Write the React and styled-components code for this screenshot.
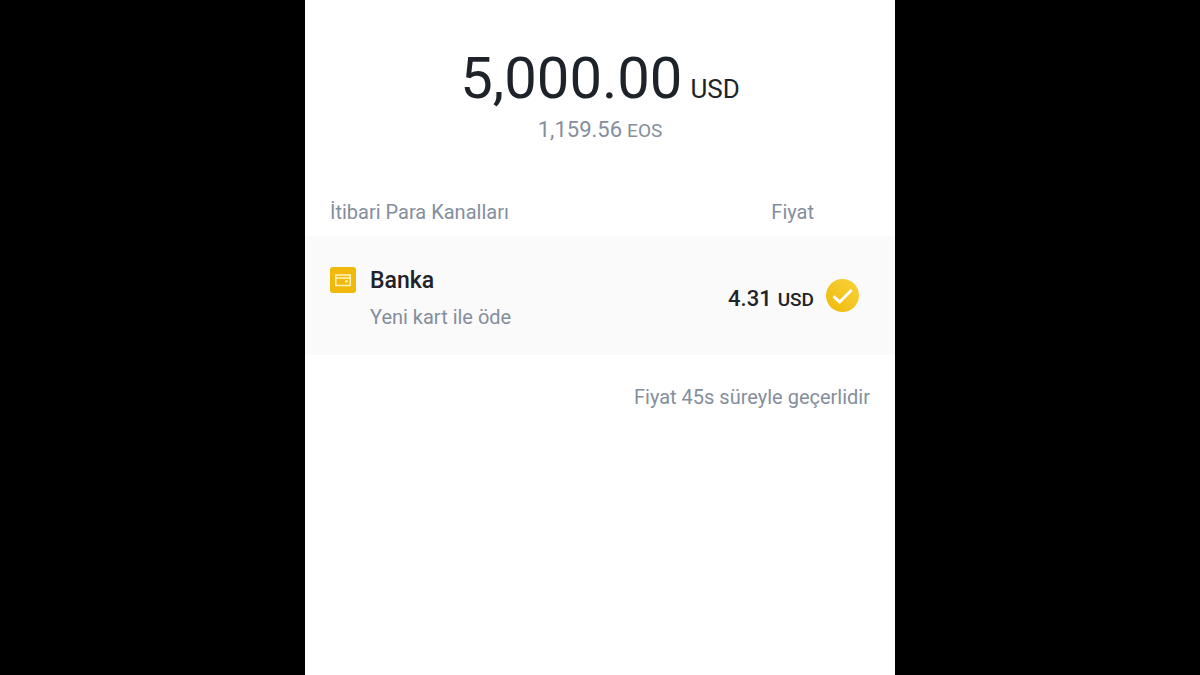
import React from 'react';
import styled, {createGlobalStyle} from 'styled-components';

const GlobalStyle = createGlobalStyle`
  * {
    box-sizing: border-box;
  }

  body {
    margin: 0;
    background-color: #000;
    color: #1e2329;
    font-family: Roboto, "Noto Sans", sans-serif;
  }
`;

const Screen = styled.main`
  width: 100%;
  max-width: 590px;
  min-height: 100vh;
  margin: 0 auto;
  padding-top: 44px;
  background-color: #fff;
`;

const Amount = styled.p`
  display: flex;
  justify-content: center;
  align-items: baseline;
  gap: ${({$large}) => ($large ? '8px' : '5px')};
  margin: 0;
  color: ${({$large}) => ($large ? '#1e2329' : '#848e9c')};
  font-size: ${({$large}) => ($large ? '58px' : '22px')};
  line-height: ${({$large}) => ($large ? '68px' : '36px')};
`;

const Unit = styled.span`
  font-size: ${({$size}) => $size}px;
  line-height: 1;
`;

const Columns = styled.div`
  display: grid;
  grid-template-columns: 1fr auto 33px;
  align-items: center;
  column-gap: 12px;
  padding: 0 36px 0 25px;
`;

const Header = styled(Columns)`
  margin-top: 48px;
  height: 40px;
  padding-bottom: 8px;
  color: #848e9c;
  font-size: 20px;
  line-height: 24px;
`;

const Channel = styled(Columns).attrs({as: 'label'})`
  min-height: 119px;
  background-color: #fafafa;
  cursor: pointer;
`;

const Method = styled.div`
  display: grid;
  grid-template-columns: 26px 1fr;
  column-gap: 14px;
  row-gap: 8px;
  align-items: start;
  padding-top: 7px;
`;

const Name = styled.span`
  font-size: 23px;
  font-weight: 500;
  line-height: 28px;
`;

const Note = styled.span`
  grid-column: 2;
  color: #848e9c;
  font-size: 20px;
  line-height: 28px;
`;

const Price = styled.span`
  display: flex;
  align-items: baseline;
  gap: 6px;
  padding-top: 6px;
  font-size: 22px;
  font-weight: 500;
  line-height: 28px;
`;

const Radio = styled.input`
  position: absolute;
  inset: 0;
  opacity: 0;
  width: 33px;
  height: 33px;
  margin: 0;
`;

const Check = styled.span`
  position: relative;
  display: flex;
`;

const Footnote = styled.p`
  margin: 28px 25px 0;
  color: #848e9c;
  font-size: 20px;
  line-height: 28px;
  text-align: right;
`;

function WalletIcon() {
  return (
    <svg width='26' height='26' viewBox='0 0 26 26' aria-hidden='true'>
      <rect width='26' height='26' rx='3' fill='#f0b90b'/>
      <path d='M5.8 8H20.2V18.6H5.8Z M6 11H20' fill='none' stroke='#fff3bf' strokeWidth='1.5'/>
      <rect x='15' y='13.2' width='2.8' height='2.2' fill='#fff3bf'/>
    </svg>
  )
}

function CheckIcon() {
  return (
    <svg width='33' height='33' viewBox='0 0 33 33' aria-hidden='true'>
      <defs>
        <linearGradient id='gold' x1='0' y1='1' x2='1' y2='0'>
          <stop offset='0' stopColor='#f0b90b'/>
          <stop offset='1' stopColor='#f8d33a'/>
        </linearGradient>
      </defs>
      <circle cx='16.5' cy='16.5' r='16.5' fill='url(#gold)'/>
      <path d='M7.6 17.3L13.7 23L25.6 11' fill='none' stroke='#fff' strokeWidth='3'/>
    </svg>
  )
}

export default function App() {
  return (
    <React.Fragment>
      <GlobalStyle/>
      <Screen>
        <Amount $large>
          5,000.00 <Unit $size={26}>USD</Unit>
        </Amount>
        <Amount>
          1,159.56 <Unit $size={19}>EOS</Unit>
        </Amount>
        <Header>
          <span>İtibari Para Kanalları</span>
          <span>Fiyat</span>
        </Header>
        <Channel>
          <Method>
            <WalletIcon/>
            <Name>Banka</Name>
            <Note>Yeni kart ile öde</Note>
          </Method>
          <Price>
            4.31 <Unit $size={19}>USD</Unit>
          </Price>
          <Check>
            <Radio type='radio' name='channel' defaultChecked/>
            <CheckIcon/>
          </Check>
        </Channel>
        <Footnote>Fiyat 45s süreyle geçerlidir</Footnote>
      </Screen>
    </React.Fragment>
  )
};
